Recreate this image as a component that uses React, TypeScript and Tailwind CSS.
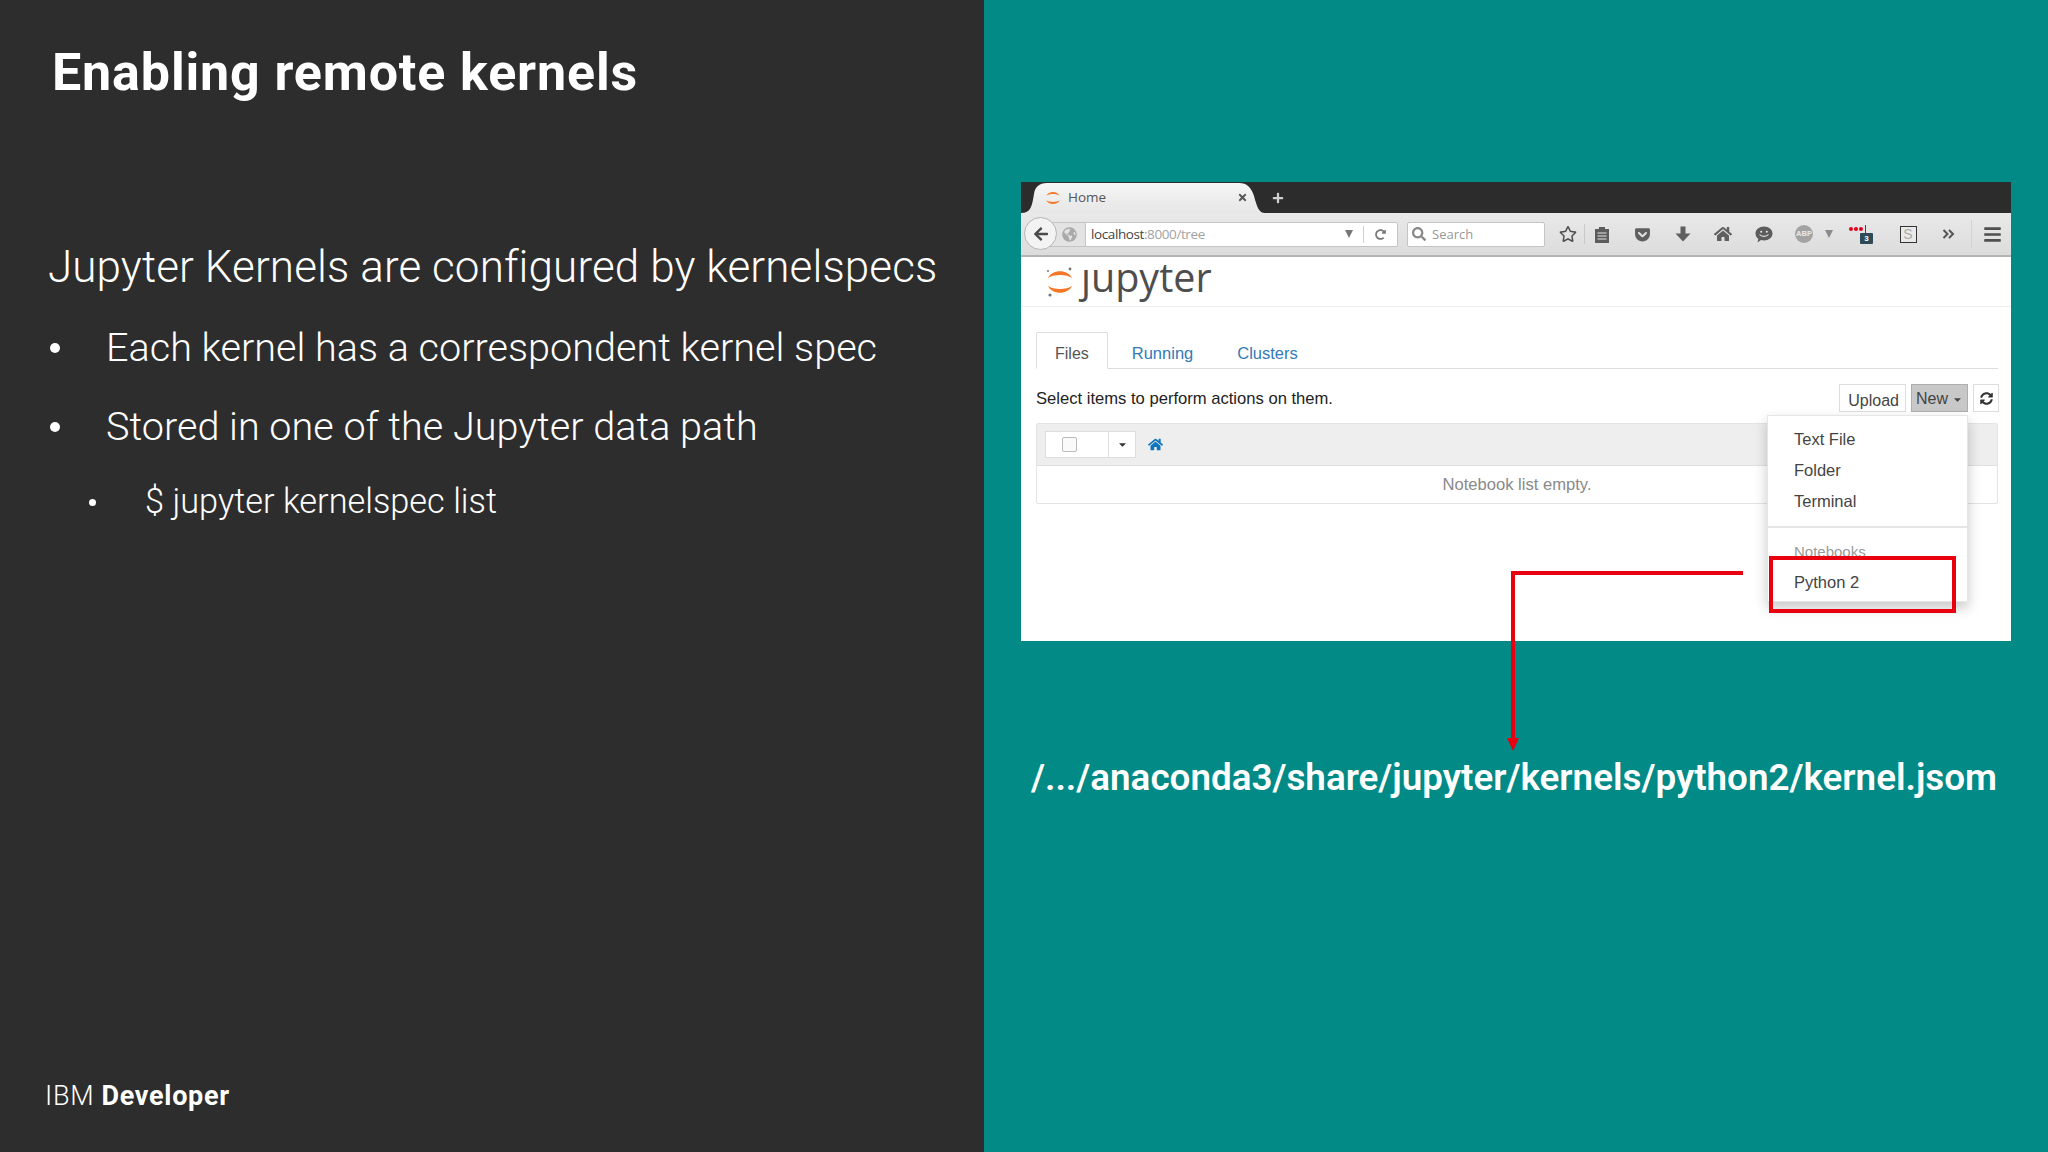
/**
 * Slide: Enabling remote kernels
 * Dark text panel on the left, browser capture on teal on the right
 */

import React from 'react';
import { FaArrowLeft, FaCaretDown, FaGlobeAmericas, FaHome, FaRegStar, FaSearch, FaSyncAlt, FaGetPocket, FaRedoAlt, FaTimes, FaPlus, FaBars } from 'react-icons/fa';

const plex = "font-['Roboto',sans-serif]";
const arial = "font-['Liberation_Sans',Arial,sans-serif]";
const ui = "font-['Open_Sans',sans-serif]";

const JupyterMark = ({ size }: { size: number }) => (
  <svg width={size} height={size} viewBox="0 0 32 32">
    <path d="M4 12 C8 3 24 3 28 12 C23 8 9 8 4 12 Z" fill="#f37726" />
    <path d="M4 20 C8 29 24 29 28 20 C23 24 9 24 4 20 Z" fill="#f37726" />
    {size > 20 && (
      <>
        <circle cx="26" cy="3" r="1.4" fill="#767677" />
        <circle cx="4" cy="5" r="1" fill="#767677" />
        <circle cx="6" cy="29" r="1.6" fill="#767677" />
      </>
    )}
  </svg>
);

const BrowserTab = () => (
  <div className="relative w-[244px] h-[31px] flex items-center pl-[23px] pr-[14px]">
    <svg className="absolute left-0 top-0" width="244" height="31" viewBox="0 0 244 31">
      <defs>
        <linearGradient id="tabFill" x1="0" y1="0" x2="0" y2="1">
          <stop offset="0" stopColor="#f6f6f6" />
          <stop offset="1" stopColor="#e6e6e6" />
        </linearGradient>
      </defs>
      <path d="M0 31 C10 31 11 24 13 12 C14 5 18 1 26 1 L218 1 C226 1 230 5 233 14 C236 25 238 31 244 31 Z" fill="url(#tabFill)" />
    </svg>
    <span className="relative flex items-center w-full">
      <JupyterMark size={18} />
      <span className={`${ui} ml-[6px] text-[13.5px] text-[#555]`}>Home</span>
      <FaTimes className="ml-auto mr-[3px] text-[#555]" size={11} />
    </span>
  </div>
);

const ToolbarIcon = ({ w = 40.5, children }: { w?: number; children: React.ReactNode }) => (
  <span className="flex justify-center items-center shrink-0 h-[28px]" style={{ width: w }}>
    {children}
  </span>
);

const BrowserChrome = () => (
  <>
    <div className="h-[31px] bg-[#2d2c2d] flex items-center">
      <BrowserTab />
      <FaPlus className="ml-[7px] text-[#cfcfcf]" size={12} />
    </div>
    <div className="relative h-[44px] flex items-center bg-gradient-to-b from-[#e9e9e9] to-[#dcdcdc] border-b-2 border-[#b4b4b4]">
      <span className="absolute left-[3px] top-[4px] w-[33px] h-[33px] rounded-full bg-[#f3f3f3] border border-[#b5b5b5] flex items-center justify-center z-10">
        <FaArrowLeft className="text-[#4a4a4a]" size={16} />
      </span>
      <div className="ml-[25px] h-[25px] w-[352px] shrink-0 flex items-stretch">
        <div className="w-[39px] bg-[#e3e3e3] border-y border-[#c4c4c4] flex items-center justify-end pr-[8px]">
          <FaGlobeAmericas className="text-[#a9a9a9]" size={15} />
        </div>
        <div className="flex-1 bg-white border border-[#c4c4c4] rounded-r-[2px] flex items-center pl-[5px]">
          <span className={`${ui} text-[13.5px] tracking-[-0.4px] text-[#444]`}>localhost<span className="text-[#a2a2a2]">:8000/tree</span></span>
          <span className="ml-auto mr-[10px] w-0 h-0 border-x-[4px] border-x-transparent border-t-[8px] border-t-[#777]" />
          <span className="w-px h-[17px] bg-[#d0d0d0]" />
          <FaRedoAlt className="mx-[11px] text-[#777]" size={11} />
        </div>
      </div>
      <div className="ml-[9px] h-[25px] w-[138px] shrink-0 bg-white border border-[#c4c4c4] rounded-[2px] flex items-center pl-[4px]">
        <FaSearch className="text-[#888]" size={14} />
        <span className={`${ui} ml-[6px] mt-[1px] text-[13px] text-[#999]`}>Search</span>
      </div>
      <span className="ml-[6px]" />
      <ToolbarIcon w={33}>
        <FaRegStar className="text-[#4f4f4f]" size={18} />
      </ToolbarIcon>
      <span className="w-px h-[20px] bg-[#c9c9c9] shrink-0" />
      <ToolbarIcon w={33}>
        <svg width="16" height="17" viewBox="0 0 16 17">
          <path d="M1 3h4V1h6v2h4v14H1Z" fill="#5c5c5c" />
          <path d="M3.5 7h9M3.5 10h9M3.5 13h9" stroke="#e6e6e6" strokeWidth="1.2" />
        </svg>
      </ToolbarIcon>
      <span className="ml-[4px]" />
      <ToolbarIcon>
        <FaGetPocket className="text-[#5f5f5f]" size={17} />
      </ToolbarIcon>
      <ToolbarIcon>
        <svg width="16" height="16" viewBox="0 0 16 16">
          <path d="M5.500 0.500h5v7h5L8 15.500 0.500 7.500h5Z" fill="#5f5f5f" />
        </svg>
      </ToolbarIcon>
      <ToolbarIcon>
        <FaHome className="text-[#5f5f5f]" size={18} />
      </ToolbarIcon>
      <ToolbarIcon>
        <svg width="18" height="17" viewBox="0 0 18 17">
          <path d="M9 0.5c4.7 0 8.5 3 8.5 7s-3.800 7-8.500 7c-1 0-2-.15-2.900-.4L2.500 16.500l.8-3.700C1.500 11.500.5 9.600.5 7.500c0-4 3.800-7 8.500-7Z" fill="#5c5c5c" />
          <circle cx="6.200" cy="5.800" r="1" fill="#e6e6e6" />
          <circle cx="11.800" cy="5.800" r="1" fill="#e6e6e6" />
          <path d="M4.500 8.500c2 2.500 7 2.500 9 0" stroke="#e6e6e6" strokeWidth="1.200" fill="none" />
        </svg>
      </ToolbarIcon>
      <ToolbarIcon w={40}>
        <span className={`${arial} w-[18px] h-[18px] rounded-full bg-[#a3a3a3] flex items-center justify-center text-[7.500px] font-bold text-[#e9e9e9]`}>ABP</span>
      </ToolbarIcon>
      <span className="ml-[1px] w-0 h-0 shrink-0 border-x-[4px] border-x-transparent border-t-[8px] border-t-[#8a8a8a]" />
      <ToolbarIcon w={56}>
        <span className="relative w-[24px] h-[18px] block">
          <span className="absolute left-0 top-[2px] flex gap-[1px]">
            <span className="w-[4px] h-[4px] rounded-full bg-[#e2001a]" />
            <span className="w-[4px] h-[4px] rounded-full bg-[#e2001a]" />
            <span className="w-[4px] h-[4px] rounded-full bg-[#e2001a]" />
          </span>
          <span className="absolute left-[16px] top-0 w-px h-[8px] bg-[#e2001a]" />
          <span className={`${arial} absolute right-0 bottom-[-1px] w-[13px] h-[11px] rounded-[1px] bg-[#2e4a56] text-white text-[8px] font-bold leading-[11px] text-center`}>3</span>
        </span>
      </ToolbarIcon>
      <ToolbarIcon w={38}>
        <span className={`${arial} w-[17px] h-[17px] bg-[#e9e9e9] border border-[#333] flex items-center justify-center text-[14px] leading-none text-[#aaa]`}>S</span>
      </ToolbarIcon>
      <ToolbarIcon w={42}>
        <svg width="13" height="10" viewBox="0 0 13 10">
          <path d="M1.500 1l4 4-4 4M7 1l4 4-4 4" fill="none" stroke="#555" strokeWidth="2" />
        </svg>
      </ToolbarIcon>
      <span className="ml-[2px] w-px h-[28px] bg-[#d2d2d2] shrink-0" />
      <ToolbarIcon w={41}>
        <FaBars className="text-[#4f4f4f]" size={19} />
      </ToolbarIcon>
    </div>
  </>
);

const NotebookPage = () => (
  <div className={`${arial} flex-1 bg-white`}>
    <div className="h-[50px] border-b border-[#eeeeee] flex items-center pl-[23px]">
      <JupyterMark size={32} />
      <span className={`${ui} ml-[5px] -mt-[8px] text-[39.500px] leading-none font-medium text-[#4e4e4e]`}>ȷupyter</span>
    </div>
    <div className="ml-[15px] mr-[13px]">
      <div className="mt-[25px] h-[37px] flex items-end border-b border-[#dddddd]">
        <span className="h-[37px] -mb-px bg-white border border-[#dddddd] border-b-white rounded-t-[2px] px-[18px] pt-[6px] flex items-center text-[16px] text-[#555]">Files</span>
        <span className="h-[36px] ml-[24px] pt-[6px] flex items-center text-[16.500px] text-[#337ab7]">Running</span>
        <span className="h-[36px] ml-[44px] pt-[6px] flex items-center text-[16.500px] text-[#337ab7]">Clusters</span>
      </div>
      <div className="h-[54px] flex items-start">
        <span className="mt-[20px] text-[16.600px] leading-[20px] text-[#222]">Select items to perform actions on them.</span>
        <div className="ml-auto mr-[-1px] mt-[15px] flex gap-[5px] text-[16px]">
          <span className="w-[67px] h-[28px] bg-white border border-[#dddddd] flex items-end justify-end pr-[6px] text-[#444] leading-[21px]">Upload</span>
          <span className="w-[57px] h-[28px] bg-[#c8c8c8] border border-[#aeaeae] pt-[2px] flex items-center justify-center gap-[4px] text-[#444]">New<FaCaretDown size={11} /></span>
          <span className="w-[26px] h-[28px] bg-white border border-[#dddddd] flex items-center justify-center text-[#333]"><FaSyncAlt size={13} /></span>
        </div>
      </div>
      <div className="border border-[#e4e4e4] rounded-[2px]">
        <div className="h-[42px] bg-[#eeeeee] flex items-center pl-[8px] border-b border-[#e0e0e0]">
          <div className="w-[91px] h-[27px] bg-white border border-[#dddddd] flex items-center">
            <span className="w-[62px] flex pl-[16px]">
              <span className="w-[15px] h-[15px] border border-[#bbbbbb] rounded-[2px] bg-[#fafafa]" />
            </span>
            <span className="flex-1 h-full border-l border-[#dddddd] flex items-center justify-center text-[#333]">
              <FaCaretDown size={11} />
            </span>
          </div>
          <FaHome className="ml-[12px] text-[#0f76bd]" size={15} />
        </div>
        <div className="h-[37px] pt-[2px] flex items-center justify-center text-[16.600px] text-[#8a8a8a]">Notebook list empty.</div>
      </div>
    </div>
  </div>
);

const NewMenu = () => (
  <div className={`${arial} absolute left-[746px] top-[233px] w-[201px] h-[187px] bg-white border border-[#e6e6e6] shadow-[0_6px_12px_rgba(0,0,0,0.22)] pt-[8px] text-[16.500px] text-[#444]`}>
    <div className="pl-[26px] h-[31px] flex items-center">Text File</div>
    <div className="pl-[26px] h-[31px] flex items-center">Folder</div>
    <div className="pl-[26px] h-[31px] flex items-center">Terminal</div>
    <div className="mt-[9px] h-[2px] bg-[#e5e5e5]" />
    <div className="pl-[26px] mt-[14px] h-[20px] flex items-center text-[15px] text-[#999]">Notebooks</div>
    <div className="pl-[26px] mt-[9px] h-[22px] flex items-center">Python 2</div>
  </div>
);

const Bullet = ({ className }: { className: string }) => (
  <span className={`rounded-full bg-white shrink-0 ${className}`} />
);

export default function App(): React.JSX.Element {
  return (
    <div className="w-[2048px] h-[1152px] overflow-hidden flex">
      <section className={`${plex} w-[984px] shrink-0 h-full bg-[#2d2d2d] text-white flex flex-col`}>
        <h1 className="ml-[52px] mt-[44px] text-[52px] leading-[58px] font-bold tracking-[0.85px]">Enabling remote kernels</h1>
        <p className="ml-[48px] mt-[138px] text-[44px] leading-[54px] font-light tracking-[0.1px]">Jupyter Kernels are configured by kernelspecs</p>
        <ul className="mt-[29px] text-[39.600px] font-light">
          <li className="flex items-center h-[50px]">
            <Bullet className="ml-[50px] mr-[46px] w-[10px] h-[10px]" />
            Each kernel has a correspondent kernel spec
          </li>
          <li className="flex items-center h-[50px] mt-[29px]">
            <Bullet className="ml-[50px] mr-[46px] w-[10px] h-[10px]" />
            Stored in one of the Jupyter data path
          </li>
          <li className="flex items-center h-[40px] mt-[30px] text-[34.300px]">
            <Bullet className="ml-[89px] mr-[49px] w-[7px] h-[7px]" />
            $ jupyter kernelspec list
          </li>
        </ul>
        <div className="mt-auto mb-[39px] ml-[45px] text-[27px] leading-[34px] tracking-[0.7px]">
          <span className="font-light">IBM </span>
          <span className="font-bold">Developer</span>
        </div>
      </section>

      <section className="relative flex-1 min-w-0 h-full bg-[#028a87] pt-[182px] pl-[37px] pr-[37px]">
        <div className="relative h-[459px] flex flex-col overflow-hidden">
          <BrowserChrome />
          <NotebookPage />
          <NewMenu />
          <div className="absolute left-[748px] top-[374px] w-[187px] h-[57px] border-[4px] border-[#e8000f]" />
        </div>
        <svg className="absolute left-0 top-0" width="1064" height="1152" viewBox="0 0 1064 1152">
          <path d="M759 573 L529 573 L529 742" fill="none" stroke="#e8000f" strokeWidth="4" />
          <path d="M523 738 L535 738 L529 751 Z" fill="#e8000f" />
        </svg>
        <p className={`${plex} mt-[112px] pr-[4px] text-center text-[36.800px] leading-[50px] font-semibold text-white whitespace-nowrap`}>/.../anaconda3/share/jupyter/kernels/python2/kernel.jsom</p>
      </section>
    </div>
  );
}
